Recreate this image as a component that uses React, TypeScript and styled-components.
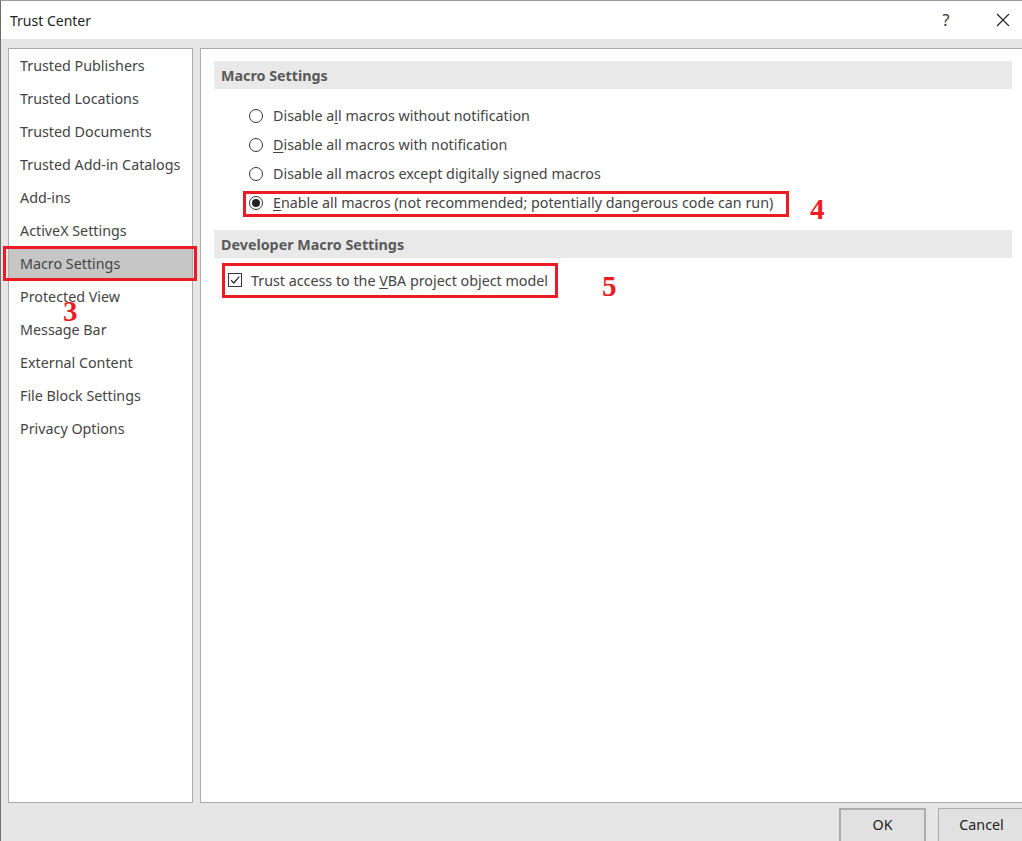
import React from "react";
import styled, { createGlobalStyle } from "styled-components";

const Global = createGlobalStyle`
  html, body { margin: 0; padding: 0; background: #e6e6e6; }
  body { font-family: "Noto Sans", "Open Sans", sans-serif; }
  * { box-sizing: border-box; }
`;

const Window = styled.div`
  position: relative;
  width: 1022px;
  height: 841px;
  overflow: hidden;
  display: flex;
  flex-direction: column;
  background: #e6e6e6;
  border-left: 1px solid #6f6f6f;
  border-top: 1px solid #9c9c9c;
`;

const TitleBar = styled.div`
  height: 38px;
  flex: none;
  background: #fff;
  display: flex;
  align-items: center;
  padding-left: 9px;
  color: #1f1f1f;
  font-size: 14px;
`;

const Title = styled.div`
  flex: 1;
`;

const TitleButtons = styled.div`
  display: flex;
  gap: 19px;
`;

const TitleButton = styled.div`
  width: 38px;
  height: 38px;
  display: flex;
  align-items: center;
  justify-content: center;
  color: #333;
  font-size: 16px;
`;

const Body = styled.div`
  flex: 1;
  display: flex;
  flex-direction: column;
  padding: 9px 0 0 7px;
`;

const Panels = styled.div`
  height: 755px;
  display: flex;
  gap: 7px;
  flex: none;
`;

const Nav = styled.div`
  position: relative;
  flex: none;
  width: 185px;
  background: #fff;
  border: 1px solid #acacac;
  display: flex;
  flex-direction: column;
`;

const NavItem = styled.div<{ $selected?: boolean }>`
  height: 33px;
  display: flex;
  align-items: center;
  padding-left: 11px;
  font-size: 14.3px;
  color: #444;
  background: ${(p) => (p.$selected ? "#c6c6c6" : "transparent")};
  position: relative;
`;

const Content = styled.div`
  flex: none;
  width: 830px;
  background: #fff;
  border: 1px solid #acacac;
  padding: 12px 0 0 13px;
  display: flex;
  flex-direction: column;
`;

const SectionHeader = styled.div`
  width: 798px;
  height: 28px;
  background: #e9e9e9;
  display: flex;
  align-items: center;
  padding-left: 7px;
  font-size: 14.3px;
  font-weight: 700;
  color: #595959;
`;

const OptionList = styled.div`
  display: flex;
  flex-direction: column;
  padding: 12px 0 13px 35px;
`;

const Option = styled.div`
  position: relative;
  height: 29px;
  display: flex;
  align-items: center;
  gap: 10px;
  font-size: 14.3px;
  color: #444;
`;

const Radio = styled.span<{ $checked?: boolean }>`
  width: 14px;
  height: 14px;
  border-radius: 50%;
  border: 1px solid #333;
  display: flex;
  align-items: center;
  justify-content: center;
  flex: none;
  &::after {
    content: "";
    width: 8px;
    height: 8px;
    border-radius: 50%;
    background: ${(p) => (p.$checked ? "#222" : "transparent")};
  }
`;

const CheckRow = styled.div`
  position: relative;
  height: 44px;
  display: flex;
  align-items: center;
  gap: 9px;
  padding-left: 14px;
  font-size: 14.3px;
  color: #444;
`;

const CheckBox = styled.span`
  width: 14px;
  height: 14px;
  border: 1px solid #333;
  display: flex;
  align-items: center;
  justify-content: center;
  flex: none;
`;

const U = styled.span`
  text-decoration: underline;
  text-underline-offset: 2px;
`;

const Highlight = styled.div<{ $l: number; $t: number; $w: number; $h: number }>`
  position: absolute;
  left: ${(p) => p.$l}px;
  top: ${(p) => p.$t}px;
  width: ${(p) => p.$w}px;
  height: ${(p) => p.$h}px;
  border: 3px solid #ed1c24;
  pointer-events: none;
`;

const Marker = styled.div<{ $l: number; $t: number }>`
  position: absolute;
  left: ${(p) => p.$l}px;
  top: ${(p) => p.$t}px;
  font-family: "Liberation Serif", "Times New Roman", serif;
  font-weight: 700;
  font-size: 29px;
  line-height: 1;
  color: #ed1c24;
`;

const Footer = styled.div`
  display: flex;
  justify-content: flex-end;
  gap: 12px;
  padding-top: 5px;
  margin-right: -3px;
`;

const Button = styled.div<{ $default?: boolean }>`
  width: 87px;
  height: 38px;
  display: flex;
  align-items: flex-start;
  justify-content: center;
  font-size: 14.3px;
  color: #222;
  background: #e1e1e1;
  border: ${(p) => (p.$default ? "2px solid #adadad" : "1px solid #adadad")};
  padding-top: ${(p) => (p.$default ? 5 : 6)}px;
`;

const navItems = [
  "Trusted Publishers",
  "Trusted Locations",
  "Trusted Documents",
  "Trusted Add-in Catalogs",
  "Add-ins",
  "ActiveX Settings",
  "Macro Settings",
  "Protected View",
  "Message Bar",
  "External Content",
  "File Block Settings",
  "Privacy Options",
];

export default function App() {
  return (
    <>
      <Global />
      <Window>
        <TitleBar>
          <Title>Trust Center</Title>
          <TitleButtons>
            <TitleButton>?</TitleButton>
            <TitleButton>
              <svg width="14" height="14" viewBox="0 0 14 14">
                <path d="M1 1 L13 13 M13 1 L1 13" stroke="#222" strokeWidth="1.1" fill="none" />
              </svg>
            </TitleButton>
          </TitleButtons>
        </TitleBar>
        <Body>
          <Panels>
            <Nav>
              {navItems.map((n) => (
                <NavItem key={n} $selected={n === "Macro Settings"}>
                  {n}
                  {n === "Macro Settings" && <Highlight $l={-6} $t={-1} $w={194} $h={35} />}
                  {n === "Protected View" && <Marker $l={54} $t={17}>3</Marker>}
                </NavItem>
              ))}
            </Nav>
            <Content>
              <SectionHeader>Macro Settings</SectionHeader>
              <OptionList>
                <Option>
                  <Radio />
                  <span>
                    Disable a<U>l</U>l macros without notification
                  </span>
                </Option>
                <Option>
                  <Radio />
                  <span>
                    <U>D</U>isable all macros with notification
                  </span>
                </Option>
                <Option>
                  <Radio />
                  <span>
                    Disable all macros except di<U>g</U>itally signed macros
                  </span>
                </Option>
                <Option>
                  <Radio $checked />
                  <span>
                    <U>E</U>nable all macros (not recommended; potentially dangerous code can run)
                  </span>
                  <Highlight $l={-6} $t={3} $w={546} $h={26} />
                  <Marker $l={561} $t={7}>4</Marker>
                </Option>
              </OptionList>
              <SectionHeader>Developer Macro Settings</SectionHeader>
              <CheckRow>
                <CheckBox>
                  <svg width="12" height="12" viewBox="0 0 12 12">
                    <path d="M2 6.2 L4.8 9 L10.2 2.6" stroke="#222" strokeWidth="1.2" fill="none" />
                  </svg>
                </CheckBox>
                <span>
                  Trust access to the <U>V</U>BA project object model
                </span>
                <Highlight $l={8} $t={5} $w={336} $h={35} />
                <Marker $l={388} $t={14}>5</Marker>
              </CheckRow>
            </Content>
          </Panels>
          <Footer>
            <Button $default>OK</Button>
            <Button>Cancel</Button>
          </Footer>
        </Body>
      </Window>
    </>
  );
}
